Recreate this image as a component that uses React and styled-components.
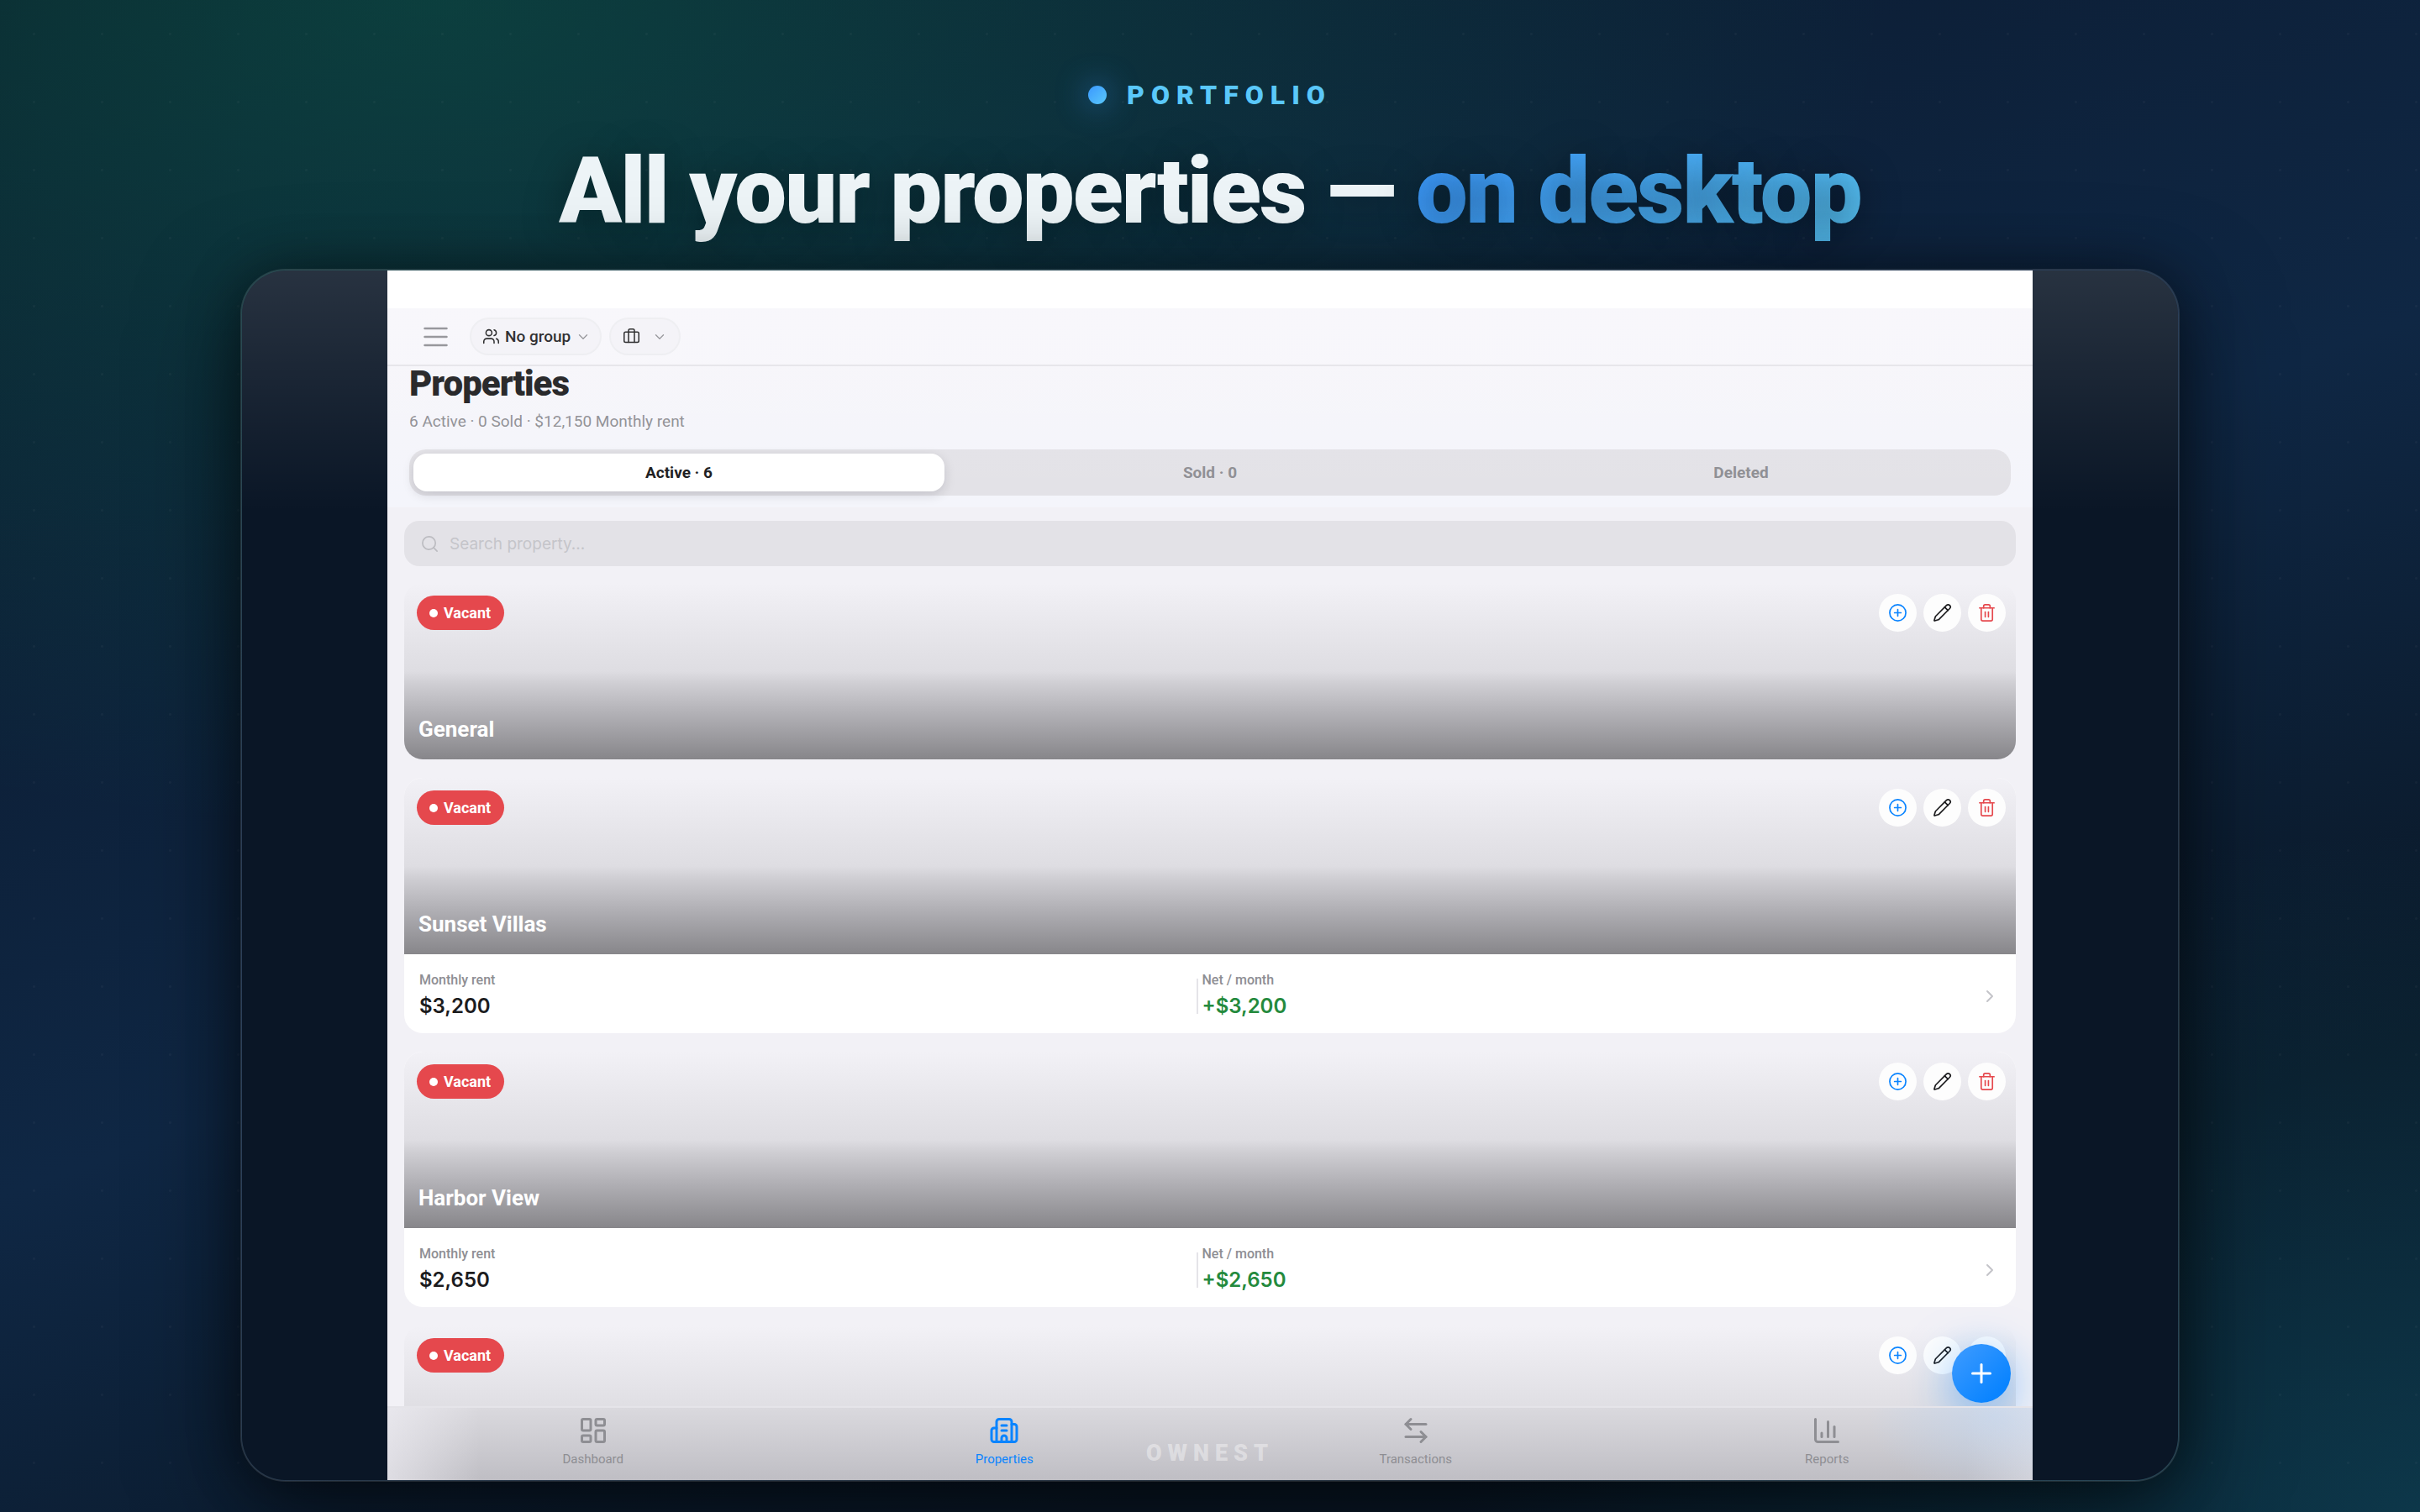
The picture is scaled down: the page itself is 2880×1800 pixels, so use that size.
import React from 'react';
import styled, { createGlobalStyle, css } from 'styled-components';
import {
    ArrowLeftRight,
    Briefcase,
    Building2,
    ChartColumn,
    ChevronDown,
    ChevronRight,
    CirclePlus,
    LayoutDashboard,
    Pencil,
    Plus,
    Search,
    Trash2,
    Users,
} from 'lucide-react';

const colors = {
    blue: '#0a84ff',
    red: '#e5484d',
    green: '#248a3d',
    ink: '#1c1c1e',
    gray: '#8e8e93',
    line: '#e5e4e9',
    fill: '#e3e2e7',
    page: '#f2f1f6',
};

const GlobalStyle = createGlobalStyle`
    * {
        box-sizing: border-box;
    }

    body {
        margin: 0;
        font-family: Roboto, "Liberation Sans", sans-serif;
        color: ${colors.ink};
    }

    button, input {
        font: inherit;
        color: inherit;
    }

    button {
        border: 0;
        padding: 0;
        background: none;
        cursor: pointer;
    }
`;

/* ---------- poster ---------- */

const Poster = styled.main`
    display: flex;
    flex-direction: column;
    align-items: center;
    height: 100vh;
    padding: 93px 0 36px;
    overflow: hidden;
    background:
        radial-gradient(circle at center, rgba(255, 255, 255, .03) 1px, transparent 2px) 0 0 / 81px 81px,
        radial-gradient(ellipse 60% 55% at 18% 0%, rgba(16, 185, 120, .24), transparent 100%),
        radial-gradient(ellipse 40% 45% at 100% 100%, rgba(20, 130, 150, .28), transparent 100%),
        linear-gradient(160deg, #0a1628 0%, #0f2744 50%, #0a1827 80%, #0a1a2c 100%);
`;

const Eyebrow = styled.p`
    display: flex;
    align-items: center;
    gap: 24px;
    margin: 0 0 35px;
    font-size: 32px;
    line-height: 40px;
    font-weight: 900;
    letter-spacing: 8px;
    color: #5ac8fa;
`;

const GlowDot = styled.span`
    width: 22px;
    height: 22px;
    border-radius: 50%;
    background: linear-gradient(135deg, #3a98ff, #5ac8fa);
    box-shadow: 0 0 36px rgba(58, 152, 255, .7);
`;

const Headline = styled.h1`
    margin: 0 0 32px;
    font-size: 110px;
    line-height: 120px;
    font-weight: 900;
    letter-spacing: -2px;
    color: #edf4f7;
    text-shadow: 0 4px 48px rgba(0, 0, 0, .4);

    em {
        font-style: normal;
        color: transparent;
        background: linear-gradient(135deg, #3a98ff, #5ac8fa);
        background-clip: text;
        -webkit-background-clip: text;
    }
`;

/* ---------- device ---------- */

const Device = styled.section`
    position: relative;
    flex: 1;
    min-height: 0;
    width: calc(80% + 4px);
    padding: 0 173px;
    border: 2px solid rgba(255, 255, 255, .12);
    border-radius: 54px;
    overflow: hidden;
    background: #0a1626;
    background-clip: padding-box;
    box-shadow: 0 40px 120px rgba(0, 0, 0, .55), 0 0 60px rgba(0, 0, 0, .35);

    /* glass shine over the top of the device */
    &::after {
        content: '';
        position: absolute;
        inset: 0;
        pointer-events: none;
        background: linear-gradient(180deg, rgba(255, 255, 255, .12), transparent 20%);
    }
`;

const Screen = styled.div`
    position: relative;
    height: 100%;
    overflow: hidden;
    background: ${colors.page};
`;

const StatusBar = styled.div`
    height: 45px;
    background: #fff;
`;

const Toolbar = styled.header`
    display: flex;
    align-items: center;
    height: 69px;
    padding: 0 42px;
    background: #f7f6fb;
    border-bottom: 2px solid ${colors.line};
`;

const MenuButton = styled.button`
    display: flex;
    margin-right: 25px;
    color: #8e8e93;
`;

const Picker = styled.button`
    display: flex;
    align-items: center;
    gap: 6px;
    height: 45px;
    margin-right: 9px;
    padding: 0 11px 0 13px;
    border: 2px solid #ededf1;
    border-radius: 23px;
    background: #f3f2f7;
    font-size: 19px;
    font-weight: 500;

    .chevron {
        color: ${colors.gray};
    }

    ${({ $iconOnly }) => $iconOnly && css`
        gap: 14px;
        padding: 0 14px;
    `}
`;

const Intro = styled.section`
    padding: 0 26px 14px;
    background: linear-gradient(180deg, #f6f5fa, #f4f5fb);
`;

const Title = styled.h2`
    margin: 0 0 12px;
    font-size: 42px;
    line-height: 42px;
    font-weight: 900;
    letter-spacing: -1px;
`;

const Summary = styled.p`
    margin: 0 0 21px;
    font-size: 19px;
    line-height: 24px;
    color: ${colors.gray};
`;

const Tabs = styled.div`
    display: grid;
    grid-template-columns: repeat(3, 1fr);
    padding: 5px;
    border-radius: 20px;
    background: ${colors.fill};
`;

const Tab = styled.button`
    height: 45px;
    border-radius: 16px;
    font-size: 19px;
    font-weight: 700;
    color: ${colors.gray};

    ${({ $active }) => $active && css`
        color: ${colors.ink};
        background: #fff;
        box-shadow: 0 4px 14px rgba(0, 0, 30, .14);
    `}
`;

const Content = styled.div`
    padding: 16px 20px 0;
`;

const SearchBox = styled.label`
    display: flex;
    align-items: center;
    gap: 12px;
    height: 54px;
    margin-bottom: 20px;
    padding: 0 19px;
    border-radius: 18px;
    background: ${colors.fill};
    color: #bcbcc1;

    input {
        flex: 1;
        padding: 0;
        border: 0;
        outline: 0;
        background: none;
        font-family: Inter, sans-serif;
        font-size: 19px;
    }

    input::placeholder {
        color: #c5c5ca;
        opacity: 1;
    }
`;

/* ---------- property card ---------- */

const CardList = styled.div`
    display: grid;
    gap: 22px;
`;

const Card = styled.article`
    border-radius: 22px;
    overflow: hidden;
    background: #fff;
`;

const Cover = styled.div`
    display: flex;
    flex-direction: column;
    justify-content: space-between;
    height: 210px;
    padding: 13px 12px 20px 15px;
    background: linear-gradient(
        180deg,
        #f2f1f6 0%,
        #dedde2 50%,
        #cfced3 57%,
        #b0afb4 75%,
        #87868a 100%
    );
`;

const CoverTop = styled.div`
    display: flex;
    align-items: center;
    gap: 8px;
`;

const Badge = styled.span`
    display: flex;
    align-items: center;
    gap: 7px;
    height: 41px;
    margin-right: auto;
    padding: 0 16px 0 15px;
    border-radius: 21px;
    background: ${colors.red};
    font-size: 18px;
    font-weight: 700;
    color: #fff;

    &::before {
        content: '';
        width: 10px;
        height: 10px;
        border-radius: 50%;
        background: #fff;
    }
`;

const RoundButton = styled.button`
    display: flex;
    align-items: center;
    justify-content: center;
    width: 45px;
    height: 45px;
    border-radius: 50%;
    background: #fdfdfd;
    color: ${({ $color }) => $color};
`;

const Name = styled.h3`
    margin: 0 2px;
    font-size: 26px;
    line-height: 32px;
    font-weight: 700;
    color: #fff;
`;

const Figures = styled.div`
    display: grid;
    grid-template-columns: 1fr 7px 1fr 26px;
    align-items: center;
    padding: 22px 18px 17px;
`;

const Divider = styled.span`
    width: 2px;
    height: 42px;
    background: ${colors.line};
`;

const Figure = styled.div`
    display: grid;
    gap: 7px;

    span {
        font-size: 16px;
        line-height: 18px;
        font-weight: 500;
        color: ${colors.gray};
    }

    strong {
        font-family: Inter, sans-serif;
        font-size: 24px;
        line-height: 30px;
        font-weight: 600;
        color: ${({ $positive }) => ($positive ? colors.green : colors.ink)};
    }
`;

const OpenButton = styled.button`
    display: flex;
    justify-content: center;
    color: #c4c4c9;
`;

/* ---------- floating parts ---------- */

const AddButton = styled.button`
    position: absolute;
    right: 26px;
    bottom: 92px;
    display: flex;
    align-items: center;
    justify-content: center;
    width: 70px;
    height: 70px;
    border-radius: 50%;
    background: linear-gradient(135deg, #409cff, #0a84ff 80%);
    box-shadow: 0 14px 56px rgba(10, 132, 255, .55);
    color: #fff;
`;

const BottomNav = styled.nav`
    position: absolute;
    left: 0;
    right: 0;
    bottom: 0;
    display: grid;
    grid-template-columns: repeat(4, 1fr);
    height: 88px;
    border-top: 2px solid ${colors.line};
    background:
        radial-gradient(ellipse 150px 95px at calc(100% - 46px) 10px, rgba(186, 212, 244, .5), transparent),
        linear-gradient(90deg, rgba(242, 241, 247, .6), transparent 110px),
        linear-gradient(270deg, rgba(242, 241, 247, .4), transparent 80px),
        linear-gradient(180deg, #dad9de, #bfbec4);
`;

const NavLink = styled.a`
    display: flex;
    flex-direction: column;
    align-items: center;
    gap: 7px;
    padding-top: 9px;
    font-size: 15px;
    line-height: 18px;
    text-decoration: none;
    color: ${({ $active }) => ($active ? colors.blue : colors.gray)};
`;

const Watermark = styled.p`
    position: absolute;
    left: 0;
    right: 0;
    bottom: 16px;
    margin: 0;
    text-align: center;
    font-size: 27px;
    line-height: 32px;
    font-weight: 900;
    letter-spacing: 7px;
    color: rgba(255, 255, 255, .4);
    pointer-events: none;
`;

const properties = [
    { name: 'General' },
    { name: 'Sunset Villas', rent: '$3,200', net: '+$3,200' },
    { name: 'Harbor View', rent: '$2,650', net: '+$2,650' },
    { name: '' },
];

const navItems = [
    { label: 'Dashboard', icon: LayoutDashboard },
    { label: 'Properties', icon: Building2, active: true },
    { label: 'Transactions', icon: ArrowLeftRight },
    { label: 'Reports', icon: ChartColumn },
];

const MenuIcon = () => (
    <svg width="31" height="26" viewBox="0 0 31 26" fill="none" stroke="currentColor" strokeWidth="2.5" strokeLinecap="round">
        <path d="M2.5 3h26M2.5 13h26M2.5 23h26" />
    </svg>
);

const PropertyCard = ({ name, rent, net }) => (
    <Card>
        <Cover>
            <CoverTop>
                <Badge>Vacant</Badge>
                <RoundButton aria-label="Add" $color={colors.blue}><CirclePlus size={23} strokeWidth={1.75} /></RoundButton>
                <RoundButton aria-label="Edit" $color={colors.ink}><Pencil size={23} strokeWidth={1.75} /></RoundButton>
                <RoundButton aria-label="Delete" $color={colors.red}><Trash2 size={23} strokeWidth={1.75} /></RoundButton>
            </CoverTop>
            {name && <Name>{name}</Name>}
        </Cover>
        {rent && (
            <Figures>
                <Figure>
                    <span>Monthly rent</span>
                    <strong>{rent}</strong>
                </Figure>
                <Divider />
                <Figure $positive>
                    <span>Net / month</span>
                    <strong>{net}</strong>
                </Figure>
                <OpenButton aria-label="Open"><ChevronRight size={24} /></OpenButton>
            </Figures>
        )}
    </Card>
);

const App = () => {
    return (
        <>
            <GlobalStyle />
            <Poster>
                <Eyebrow><GlowDot />PORTFOLIO</Eyebrow>
                <Headline>All your properties — <em>on desktop</em></Headline>
                <Device>
                    <Screen>
                        <StatusBar />
                        <Toolbar>
                            <MenuButton aria-label="Menu"><MenuIcon /></MenuButton>
                            <Picker>
                                <Users size={21} strokeWidth={1.75} />
                                No group
                                <ChevronDown className="chevron" size={18} strokeWidth={1.75} />
                            </Picker>
                            <Picker $iconOnly aria-label="Company">
                                <Briefcase size={21} strokeWidth={1.75} />
                                <ChevronDown className="chevron" size={18} strokeWidth={1.75} />
                            </Picker>
                        </Toolbar>
                        <Intro>
                            <Title>Properties</Title>
                            <Summary>6 Active · 0 Sold · $12,150 Monthly rent</Summary>
                            <Tabs>
                                <Tab $active>Active · 6</Tab>
                                <Tab>Sold · 0</Tab>
                                <Tab>Deleted</Tab>
                            </Tabs>
                        </Intro>
                        <Content>
                            <SearchBox>
                                <Search size={23} strokeWidth={1.75} />
                                <input type="text" aria-label="Search property" placeholder="Search property..." />
                            </SearchBox>
                            <CardList>
                                {properties.map((item, i) => <PropertyCard key={i} {...item} />)}
                            </CardList>
                        </Content>
                        <AddButton aria-label="Add property"><Plus size={36} /></AddButton>
                        <BottomNav>
                            {navItems.map(({ label, icon: Icon, active }) => (
                                <NavLink key={label} href="#" $active={active}>
                                    <Icon size={36} />
                                    {label}
                                </NavLink>
                            ))}
                        </BottomNav>
                    </Screen>
                    <Watermark>OWNEST</Watermark>
                </Device>
            </Poster>
        </>
    );
};

export default App;
